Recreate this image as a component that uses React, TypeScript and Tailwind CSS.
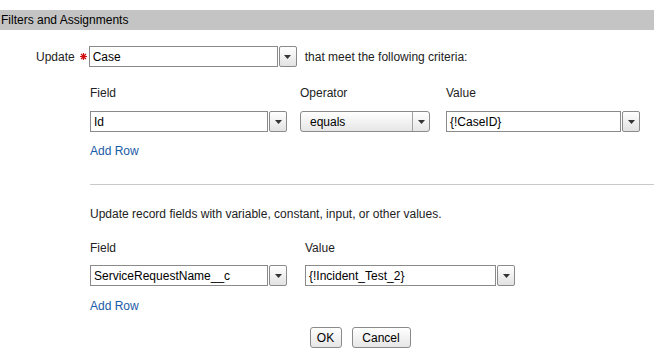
import type { ReactNode } from "react";

function DropButton() {
  return (
    <div className="ml-[1px] flex h-[21px] w-[18px] shrink-0 items-center justify-center rounded-[2px] border border-[#8a8a8a] bg-gradient-to-b from-white to-[#e2e2e2]">
      <svg width="7" height="4" viewBox="0 0 7 4">
        <path d="M0 0h7L3.5 4z" fill="#333" />
      </svg>
    </div>
  );
}

function Combo({ value, width }: { value: string; width: string }) {
  return (
    <div className="flex items-center">
      <div
        className={`${width} flex h-[21px] items-center border border-[#8a8a8a] bg-white pl-[3px] text-[12px] text-black`}
      >
        {value}
      </div>
      <DropButton />
    </div>
  );
}

function Select({ value }: { value: string }) {
  return (
    <div className="flex h-[21px] w-[130px] items-center rounded-[3px] border border-[#8a8a8a] bg-gradient-to-b from-white to-[#e6e6e6] text-[12px] text-black">
      <span className="flex-1 pl-[9px]">{value}</span>
      <div className="flex h-full w-[17px] items-center justify-center border-l border-[#a0a0a0]">
        <svg width="7" height="4" viewBox="0 0 7 4">
          <path d="M0 0h7L3.5 4z" fill="#333" />
        </svg>
      </div>
    </div>
  );
}

function Label({ children, width }: { children: ReactNode; width: string }) {
  return <div className={`${width} leading-[14px]`}>{children}</div>;
}

export default function App() {
  return (
    <div
      className="h-[357px] w-[654px] overflow-hidden bg-white text-[12px] text-[#222]"
      style={{ fontFamily: '"Liberation Sans", Arial, sans-serif' }}
    >
      <div className="mt-[10px] h-[20px] bg-[#c4c4c4] pl-[1px] leading-[20px] text-black">
        Filters and Assignments
      </div>

      <div className="mt-[16px] flex h-[21px] items-center pl-[36px]">
        <span>Update</span>
        {/* required marker */}
        <svg className="ml-[5px]" width="7" height="7" viewBox="0 0 7 7">
          <path d="M3.5 0v7M0 3.5h7M1 1l5 5M6 1l-5 5" stroke="#d01010" strokeWidth="1.2" />
        </svg>
        <div className="ml-[2px] flex items-center">
          <div className="flex h-[21px] w-[189px] items-center border border-[#8a8a8a] bg-white pl-[3px] text-black">
            Case
          </div>
          <DropButton />
        </div>
        <span className="ml-[8px]">that meet the following criteria:</span>
      </div>

      <div className="pl-[90px]">
        <div className="mt-[19px] flex">
          <Label width="w-[210px]">Field</Label>
          <Label width="w-[146px]">Operator</Label>
          <Label width="w-auto">Value</Label>
        </div>
        <div className="mt-[11px] flex">
          <div className="w-[210px]">
            <Combo value="Id" width="w-[178px]" />
          </div>
          <div className="w-[146px]">
            <Select value="equals" />
          </div>
          <Combo value="{!CaseID}" width="w-[175px]" />
        </div>
        <div className="mt-[12px] leading-[14px] text-[#1a5ba6]">Add Row</div>

        <div className="mt-[26px] h-px bg-[#c8c8c8]" />

        <div className="mt-[22px] leading-[14px]">
          Update record fields with variable, constant, input, or other values.
        </div>

        <div className="mt-[20px] flex">
          <Label width="w-[215px]">Field</Label>
          <Label width="w-auto">Value</Label>
        </div>
        <div className="mt-[10px] flex">
          <div className="w-[215px]">
            <Combo value="ServiceRequestName__c" width="w-[178px]" />
          </div>
          <Combo value="{!Incident_Test_2}" width="w-[191px]" />
        </div>
        <div className="mt-[13px] leading-[14px] text-[#1a5ba6]">Add Row</div>

        <div className="mt-[14px] flex justify-center gap-[10px] pr-[24px]">
          <button className="h-[21px] w-[32px] rounded-[3px] border border-[#8a8a8a] bg-gradient-to-b from-white to-[#e6e6e6] text-[12px] text-black">
            OK
          </button>
          <button className="h-[21px] w-[59px] rounded-[3px] border border-[#8a8a8a] bg-gradient-to-b from-white to-[#e6e6e6] text-[12px] text-black">
            Cancel
          </button>
        </div>
      </div>
    </div>
  );
}
